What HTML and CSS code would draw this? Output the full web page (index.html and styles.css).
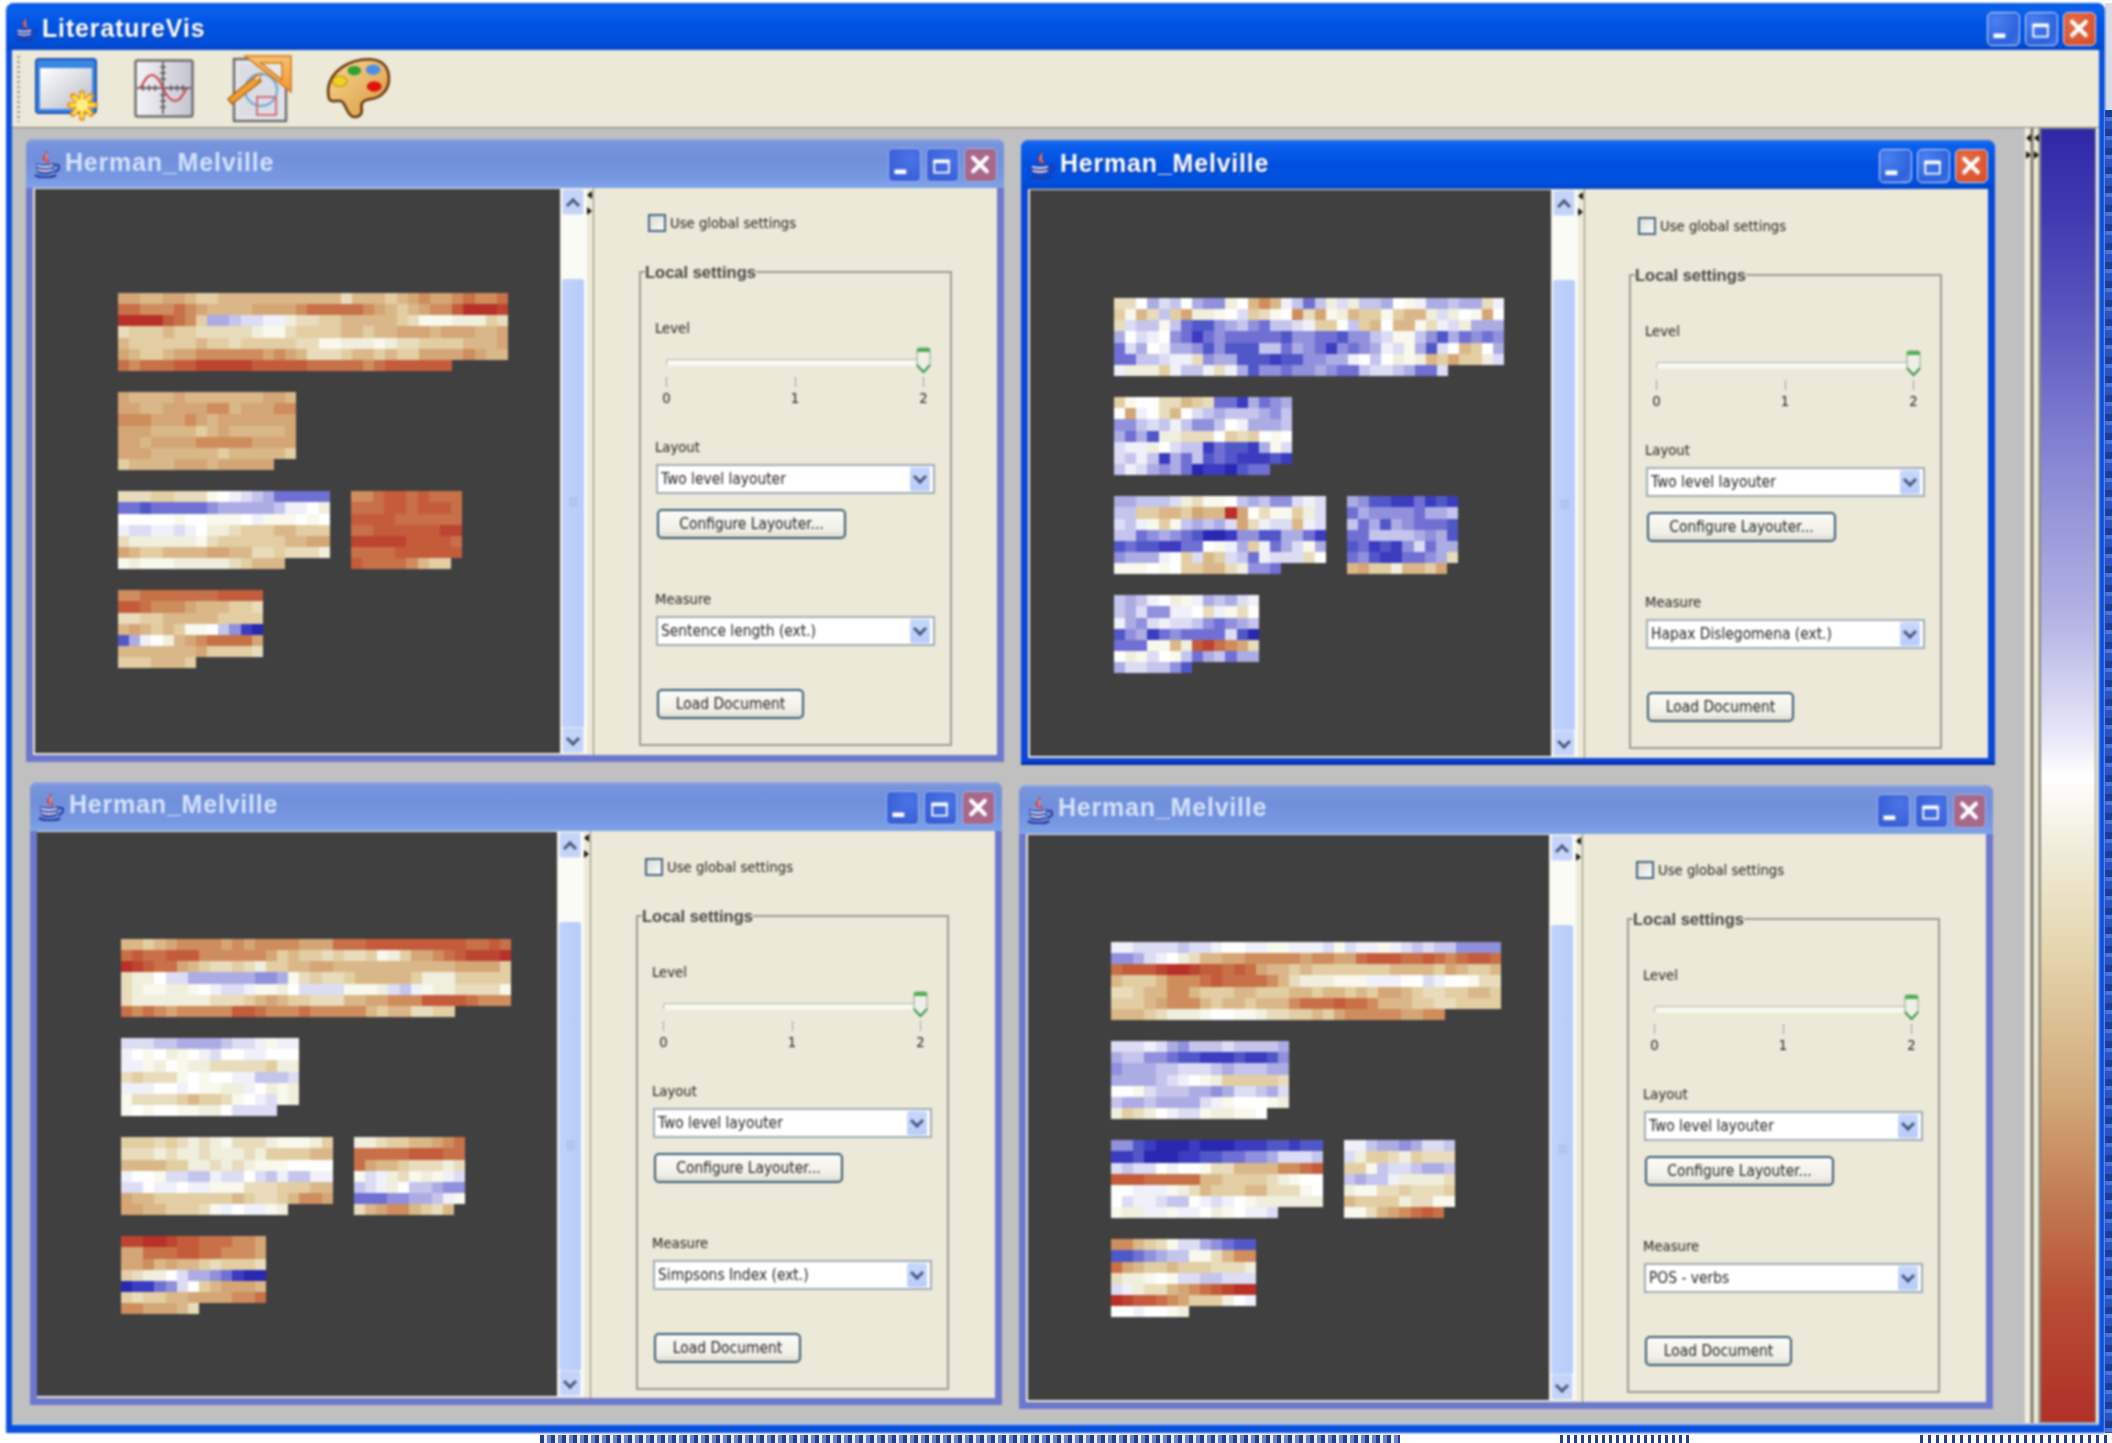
FILE: index.html
```html
<!DOCTYPE html>
<html lang="en">
<head>
    <meta charset="UTF-8">
    <meta name="viewport" content="width=device-width, initial-scale=1.0">
    <title>LiteratureVis</title>
    <link rel="stylesheet" href="styles.css">
</head>
<body>
    <!-- Shared icons -->
    <svg class="defs" width="0" height="0">
        <linearGradient id="gWin" x1="0" y1="0" x2="1" y2="1"><stop offset="0" stop-color="#fff"/><stop offset="1" stop-color="#b8bcc8"/></linearGradient>
        <linearGradient id="gGraph" x1="0" y1="0" x2="1" y2="0"><stop offset="0" stop-color="#f4f4f6"/><stop offset=".5" stop-color="#dcdce4"/><stop offset="1" stop-color="#c4c4d2"/></linearGradient>
        <linearGradient id="gSquare" x1="0" y1="0" x2="0" y2="1"><stop offset="0" stop-color="#f8c070"/><stop offset="1" stop-color="#f09a30"/></linearGradient>
        <linearGradient id="gPal" x1="0" y1="0" x2="1" y2="1"><stop offset="0" stop-color="#f8d890"/><stop offset="1" stop-color="#d89840"/></linearGradient>
        <symbol id="java" viewBox="0 0 26 28">
            <path d="M12 0c4 3-2 5 1 8 1 2 3 3 2 5-5-1-8-5-5-8 2-1 2-3 2-5z" fill="#d8382c"/>
            <path d="M13 4c-2 2-2 4 0 7" fill="none" stroke="#f4b0a0" stroke-width="1.2"/>
            <path d="M2 13c4 2 14 2 18 0l-1 9c-3 3-13 3-16 0z" fill="#26389c"/>
            <path d="M3 15.500c4 2 12 2 16 0M3.500 19.500c4 2 11 2 15 0" fill="none" stroke="#f4f6fc" stroke-width="1.8"/>
            <path d="M20 15c7-2 7 5 0 7" fill="none" stroke="#26389c" stroke-width="2"/>
            <path d="M1 25c5 3 17 3 21 0" fill="none" stroke="#26389c" stroke-width="2.500"/>
        </symbol>
        <symbol id="btnMin" viewBox="0 0 33 33"><rect x="6" y="22" width="13" height="5" fill="#fff"/></symbol>
        <symbol id="btnMax" viewBox="0 0 33 33"><path d="M8 13.500h16v12H8z" fill="none" stroke="#fff" stroke-width="2"/><rect x="7" y="11" width="18" height="4" fill="#fff"/></symbol>
        <symbol id="btnClose" viewBox="0 0 33 33"><path d="M9 9l15 15M24 9L9 24" stroke="#fff" stroke-width="4.500" stroke-linecap="round"/></symbol>
        <symbol id="thumb" viewBox="0 0 15 28">
            <path d="M1 3q0-2 2-2h9q2 0 2 2v16l-6.500 7L1 19z" fill="#efefe8" stroke="#8aa890" stroke-width="1"/>
            <path d="M1 5V3q0-2 2-2h9q2 0 2 2v2z" fill="#4caf50"/>
            <path d="M1 18l6.500 7 6.500-7" fill="none" stroke="#3f9a50" stroke-width="2"/>
        </symbol>
    </svg>

    <div class="window">
        <div class="titlebar">
            <svg class="main-java"><use href="#java"/></svg>
            <span class="main-title">LiteratureVis</span>
            <div class="win-buttons">
                <span class="win-btn"><svg><use href="#btnMin"/></svg></span>
                <span class="win-btn"><svg><use href="#btnMax"/></svg></span>
                <span class="win-btn close"><svg><use href="#btnClose"/></svg></span>
            </div>
        </div>

        <!-- Toolbar -->
        <div class="toolbar">
            <div class="grip"></div>
            <svg class="tool tool-new" viewBox="0 0 66 66">
                <rect x="2" y="3" width="60" height="54" rx="3" fill="#3a86e4" stroke="#1c50b0" stroke-width="2"/>
                <rect x="6" y="12" width="52" height="41" fill="url(#gWin)"/>
                <g stroke="#e89020" stroke-width="6" stroke-linecap="round"><path d="M48 37v25M36 49h25M39 40l18 18M57 40L39 58"/></g>
                <g stroke="#ffe040" stroke-width="3.500" stroke-linecap="round"><path d="M48 38v23M37 49h23M40 41l16 16M56 41L40 57"/></g>
                <circle cx="48" cy="49" r="6" fill="#fff08a"/>
            </svg>
            <svg class="tool tool-graph" viewBox="0 0 60 60">
                <rect x="1.500" y="1.500" width="57" height="56" rx="2" fill="url(#gGraph)" stroke="#6e6e6e" stroke-width="2.500"/>
                <path d="M29 3v52M3 29h54" stroke="#444" stroke-width="1.500" fill="none"/>
                <path d="M26 8h6M26 14h6M26 20h6M26 36h6M26 42h6M26 48h6M9 26v6M15 26v6M21 26v6M37 26v6M43 26v6M49 26v6" stroke="#555" stroke-width="1.500"/>
                <path d="M6 29c4-5 6-13 12-13s9 9 11 13 6 13 12 13 9-9 12-13" fill="none" stroke="#d0404c" stroke-width="2"/>
            </svg>
            <svg class="tool tool-draw" viewBox="0 0 68 68">
                <rect x="9" y="4" width="52" height="62" fill="#e4e4ea" stroke="#6e6e6e" stroke-width="2.500"/>
                <rect x="14" y="9" width="42" height="52" fill="#dcdce4"/>
                <circle cx="36" cy="35" r="16" fill="none" stroke="#68a8d8" stroke-width="2"/>
                <rect x="32" y="42" width="19" height="18" fill="none" stroke="#d07078" stroke-width="2"/>
                <path d="M20 1h46v36z" fill="url(#gSquare)" stroke="#d07818" stroke-width="1.500"/>
                <path d="M36 8h21v17z" fill="#e8e8ea" stroke="#d07818" stroke-width="1.500"/>
                <path d="M3 44l29-24 4 6-29 23z" fill="#f0a030" stroke="#b06010" stroke-width="1.500"/>
                <path d="M28 23l9-5-4 9z" fill="#f4d8b0" stroke="#b06010" stroke-width="1"/>
            </svg>
            <svg class="tool tool-palette" viewBox="0 0 64 60">
                <path d="M3 30C5 14 22 2 42 2c14 0 20 9 19 21-1 10-9 16-17 17-8 1-10 4-9 9 1 6-3 9-8 8-7-2-7-14-12-15-4-1-9 2-11-2-1-3-1-6-1-10z" fill="url(#gPal)" stroke="#6a3810" stroke-width="2.500"/>
                <ellipse cx="14" cy="23" rx="7" ry="5" fill="#f4d020" stroke="#b09010"/>
                <ellipse cx="28" cy="13" rx="6.500" ry="4.500" fill="#30a030"/>
                <ellipse cx="46" cy="12" rx="7" ry="5" fill="#4a90e8"/>
                <ellipse cx="47" cy="28" rx="7" ry="5" fill="#e01010"/>
            </svg>
        </div>

        <div class="main">
            <!-- Internal frames -->
            <div class="desktop">
                <div class="frame frame-a">
                    <div class="frame-title">
                        <svg class="frame-java"><use href="#java"/></svg>
                        <span class="frame-name">Herman_Melville</span>
                        <div class="win-buttons">
                            <span class="win-btn"><svg><use href="#btnMin"/></svg></span>
                            <span class="win-btn"><svg><use href="#btnMax"/></svg></span>
                            <span class="win-btn close"><svg><use href="#btnClose"/></svg></span>
                        </div>
                    </div>
                    <div class="frame-body">
                        <div class="canvas" data-map="sentence"></div>
                        <div class="scrollbar">
                            <span class="scroll-btn"><i class="chev up"></i></span>
                            <div class="scroll-track"><div class="scroll-thumb"><span class="scroll-grip"></span></div></div>
                            <span class="scroll-btn"><i class="chev"></i></span>
                        </div>
                        <div class="divider"><i class="tri-left"></i><i class="tri-right"></i></div>
                        <div class="settings">
                            <label class="global"><span class="checkbox"></span>Use global settings</label>
                            <fieldset class="local">
                                <legend>Local settings</legend>
                                <div class="field-label first">Level</div>
                                <div class="slider">
                                    <div class="track"></div>
                                    <svg class="slider-thumb"><use href="#thumb"/></svg>
                                    <div class="scale">
                                        <span class="mark"><i></i><b>0</b></span>
                                        <span class="mark"><i></i><b>1</b></span>
                                        <span class="mark"><i></i><b>2</b></span>
                                    </div>
                                </div>
                                <div class="field-label">Layout</div>
                                <div class="combo"><span>Two level layouter</span><span class="combo-btn"><i class="chev"></i></span></div>
                                <button class="btn configure" type="button">Configure Layouter...</button>
                                <div class="field-label measure">Measure</div>
                                <div class="combo"><span>Sentence length (ext.)</span><span class="combo-btn"><i class="chev"></i></span></div>
                                <button class="btn load" type="button">Load Document</button>
                            </fieldset>
                        </div>
                    </div>
                </div>

                <div class="frame frame-b active">
                    <div class="frame-title">
                        <svg class="frame-java"><use href="#java"/></svg>
                        <span class="frame-name">Herman_Melville</span>
                        <div class="win-buttons">
                            <span class="win-btn"><svg><use href="#btnMin"/></svg></span>
                            <span class="win-btn"><svg><use href="#btnMax"/></svg></span>
                            <span class="win-btn close"><svg><use href="#btnClose"/></svg></span>
                        </div>
                    </div>
                    <div class="frame-body">
                        <div class="canvas" data-map="hapax"></div>
                        <div class="scrollbar">
                            <span class="scroll-btn"><i class="chev up"></i></span>
                            <div class="scroll-track"><div class="scroll-thumb"><span class="scroll-grip"></span></div></div>
                            <span class="scroll-btn"><i class="chev"></i></span>
                        </div>
                        <div class="divider"><i class="tri-left"></i><i class="tri-right"></i></div>
                        <div class="settings">
                            <label class="global"><span class="checkbox"></span>Use global settings</label>
                            <fieldset class="local">
                                <legend>Local settings</legend>
                                <div class="field-label first">Level</div>
                                <div class="slider">
                                    <div class="track"></div>
                                    <svg class="slider-thumb"><use href="#thumb"/></svg>
                                    <div class="scale">
                                        <span class="mark"><i></i><b>0</b></span>
                                        <span class="mark"><i></i><b>1</b></span>
                                        <span class="mark"><i></i><b>2</b></span>
                                    </div>
                                </div>
                                <div class="field-label">Layout</div>
                                <div class="combo"><span>Two level layouter</span><span class="combo-btn"><i class="chev"></i></span></div>
                                <button class="btn configure" type="button">Configure Layouter...</button>
                                <div class="field-label measure">Measure</div>
                                <div class="combo"><span>Hapax Dislegomena (ext.)</span><span class="combo-btn"><i class="chev"></i></span></div>
                                <button class="btn load" type="button">Load Document</button>
                            </fieldset>
                        </div>
                    </div>
                </div>

                <div class="frame frame-c">
                    <div class="frame-title">
                        <svg class="frame-java"><use href="#java"/></svg>
                        <span class="frame-name">Herman_Melville</span>
                        <div class="win-buttons">
                            <span class="win-btn"><svg><use href="#btnMin"/></svg></span>
                            <span class="win-btn"><svg><use href="#btnMax"/></svg></span>
                            <span class="win-btn close"><svg><use href="#btnClose"/></svg></span>
                        </div>
                    </div>
                    <div class="frame-body">
                        <div class="canvas" data-map="simpson"></div>
                        <div class="scrollbar">
                            <span class="scroll-btn"><i class="chev up"></i></span>
                            <div class="scroll-track"><div class="scroll-thumb"><span class="scroll-grip"></span></div></div>
                            <span class="scroll-btn"><i class="chev"></i></span>
                        </div>
                        <div class="divider"><i class="tri-left"></i><i class="tri-right"></i></div>
                        <div class="settings">
                            <label class="global"><span class="checkbox"></span>Use global settings</label>
                            <fieldset class="local">
                                <legend>Local settings</legend>
                                <div class="field-label first">Level</div>
                                <div class="slider">
                                    <div class="track"></div>
                                    <svg class="slider-thumb"><use href="#thumb"/></svg>
                                    <div class="scale">
                                        <span class="mark"><i></i><b>0</b></span>
                                        <span class="mark"><i></i><b>1</b></span>
                                        <span class="mark"><i></i><b>2</b></span>
                                    </div>
                                </div>
                                <div class="field-label">Layout</div>
                                <div class="combo"><span>Two level layouter</span><span class="combo-btn"><i class="chev"></i></span></div>
                                <button class="btn configure" type="button">Configure Layouter...</button>
                                <div class="field-label measure">Measure</div>
                                <div class="combo"><span>Simpsons Index (ext.)</span><span class="combo-btn"><i class="chev"></i></span></div>
                                <button class="btn load" type="button">Load Document</button>
                            </fieldset>
                        </div>
                    </div>
                </div>

                <div class="frame frame-d">
                    <div class="frame-title">
                        <svg class="frame-java"><use href="#java"/></svg>
                        <span class="frame-name">Herman_Melville</span>
                        <div class="win-buttons">
                            <span class="win-btn"><svg><use href="#btnMin"/></svg></span>
                            <span class="win-btn"><svg><use href="#btnMax"/></svg></span>
                            <span class="win-btn close"><svg><use href="#btnClose"/></svg></span>
                        </div>
                    </div>
                    <div class="frame-body">
                        <div class="canvas" data-map="verbs"></div>
                        <div class="scrollbar">
                            <span class="scroll-btn"><i class="chev up"></i></span>
                            <div class="scroll-track"><div class="scroll-thumb"><span class="scroll-grip"></span></div></div>
                            <span class="scroll-btn"><i class="chev"></i></span>
                        </div>
                        <div class="divider"><i class="tri-left"></i><i class="tri-right"></i></div>
                        <div class="settings">
                            <label class="global"><span class="checkbox"></span>Use global settings</label>
                            <fieldset class="local">
                                <legend>Local settings</legend>
                                <div class="field-label first">Level</div>
                                <div class="slider">
                                    <div class="track"></div>
                                    <svg class="slider-thumb"><use href="#thumb"/></svg>
                                    <div class="scale">
                                        <span class="mark"><i></i><b>0</b></span>
                                        <span class="mark"><i></i><b>1</b></span>
                                        <span class="mark"><i></i><b>2</b></span>
                                    </div>
                                </div>
                                <div class="field-label">Layout</div>
                                <div class="combo"><span>Two level layouter</span><span class="combo-btn"><i class="chev"></i></span></div>
                                <button class="btn configure" type="button">Configure Layouter...</button>
                                <div class="field-label measure">Measure</div>
                                <div class="combo"><span>POS - verbs</span><span class="combo-btn"><i class="chev"></i></span></div>
                                <button class="btn load" type="button">Load Document</button>
                            </fieldset>
                        </div>
                    </div>
                </div>
            </div>

            <!-- Splitter and colour legend -->
            <div class="splitter"><i class="tri-left"></i><i class="tri-left"></i><i class="tri-right"></i><i class="tri-right"></i></div>
            <div class="legend-bar"></div>
        </div>
    </div>

    <script src="heatmap.js"></script>
</body>
</html>
```

FILE: styles.css
```css
/* General Styles */
html, body {
    margin: 0;
    padding: 0;
    overflow: hidden;
}

/* What shows of the window behind, to the right and below */
body {
    width: 2112px;
    height: 1443px;
    font-family: "DejaVu Sans", "Liberation Sans", sans-serif;
    font-stretch: condensed;
    font-size: 14px;
    color: #222;
    background:
        repeating-linear-gradient(90deg, #24408c 0 4px, #e8ecf8 4px 7px, #6a86c8 7px 11px) 540px 1435px / 860px 8px no-repeat,
        repeating-linear-gradient(90deg, #24408c 0 3px, #fff 3px 7px) 1560px 1435px / 130px 8px no-repeat,
        repeating-linear-gradient(90deg, #24408c 0 3px, #fff 3px 8px) 1920px 1435px / 190px 8px no-repeat,
        repeating-linear-gradient(#1c3c94 0 7px, #4a76d8 7px 11px, #2a54bc 11px 19px) 2105px 110px / 7px 1323px no-repeat,
        linear-gradient(#d8dce4, #d8dce4) 2105px 3px / 7px 107px no-repeat,
        #fff;
}

.defs {
    position: absolute;
}

/* Main window */
.window {
    box-sizing: border-box;
    width: 2099px;
    height: 1430px;
    margin: 3px 0 0 6px;
    padding: 0 6px 8px;
    display: flex;
    flex-direction: column;
    background-color: #0a50dc;
    border-radius: 8px 8px 0 0;
    filter: blur(0.8px);
}

.titlebar {
    box-sizing: border-box;
    height: 47px;
    margin: 0 -6px;
    padding: 4px 9px 0;
    display: flex;
    align-items: center;
    background: linear-gradient(#0a5ae0 0, #0a62ec 12%, #0054e4 45%, #0050dc 80%, #0346c8 100%);
    border-radius: 8px 8px 0 0;
}

.main-java {
    width: 22px;
    height: 26px;
    margin-right: 5px;
}

.main-title {
    font-family: "Liberation Sans", sans-serif;
    font-stretch: normal;
    font-weight: bold;
    font-size: 25px;
    letter-spacing: 0.85px;
    color: #fff;
    text-shadow: 1px 1px 1px #002a90;
}

.win-buttons {
    margin-left: auto;
    display: flex;
    gap: 5px;
}

.win-btn {
    box-sizing: border-box;
    width: 33px;
    height: 34px;
    border: 1.5px solid #d0def8;
    border-radius: 5px;
    background: radial-gradient(circle at 25% 25%, #4a80f0, #2e62dc 70%, #4a78e8);
}

.win-btn svg {
    display: block;
    width: 30px;
    height: 31px;
}

.win-btn.close {
    background: radial-gradient(circle at 30% 30%, #e46a44, #d84c26);
}

/* Toolbar */
.toolbar {
    box-sizing: border-box;
    height: 78px;
    padding-left: 5px;
    display: flex;
    align-items: center;
    background-color: #ece9d8;
    border-bottom: 1px solid #84816f;
}

.grip {
    width: 3px;
    height: 66px;
    background-image: linear-gradient(#9a9a90 50%, transparent 50%);
    background-size: 3px 5px;
}

.tool {
    display: block;
    flex: none;
}

.tool-new {
    width: 66px;
    height: 66px;
    margin-left: 14px;
}

.tool-graph {
    width: 60px;
    height: 60px;
    margin-left: 34px;
}

.tool-draw {
    width: 68px;
    height: 68px;
    margin-left: 31px;
}

.tool-palette {
    width: 67px;
    height: 63px;
    margin-left: 32px;
}

/* Desktop area */
.main {
    flex: 1;
    display: flex;
    min-height: 0;
    background-color: #ece9d8;
    border-bottom: 2px solid #a8c8f0;
}

.desktop {
    position: relative;
    width: 2013px;
    background-color: #c0c0c0;
}

.splitter {
    position: relative;
    box-sizing: border-box;
    width: 15px;
    background: linear-gradient(90deg, #f4f2e6 0, #ece9d8 5px, #7c7c6c 6px, #7c7c6c 8px, #ece9d8 9px, #ece9d8 13px, #8a8a78 14px);
}

.splitter i {
    position: absolute;
}

.splitter i:nth-child(1) { left: 1px; top: 6px; }
.splitter i:nth-child(2) { left: 9px; top: 6px; }
.splitter i:nth-child(3) { left: 1px; top: 23px; }
.splitter i:nth-child(4) { left: 9px; top: 23px; }

.legend-bar {
    width: 56px;
    border: 1px solid #8c8c80;
    box-sizing: border-box;
    background: linear-gradient(#2e28a8 0, #3e38b0 6%, #5450bc 13%, #8888d4 26%, #b4b4e6 38%, #e8e8f8 47%, #fff 50%, #f0ecd8 56%, #e4d4ac 64%, #d2a878 75%, #c27a50 83%, #b84c34 91%, #b03028 100%);
}

.tri-left, .tri-right {
    display: block;
    width: 0;
    height: 0;
    border-top: 4px solid transparent;
    border-bottom: 4px solid transparent;
}

.tri-left {
    border-right: 5px solid #111;
}

.tri-right {
    border-left: 5px solid #111;
}

/* Internal frames */
.frame {
    position: absolute;
    box-sizing: border-box;
    display: flex;
    flex-direction: column;
    background-color: #6c78cc;
    border-radius: 8px 8px 0 0;
}

.frame-a { left: 14px; top: 11px; width: 978px; height: 623px; --canvas-w: 525px; --canvas-left: 2px; --pad-x: 83px; --pad-y: 104px; --settings-top: 26px; --local-left: 45px; --name-lift: -2px; }
.frame-b { left: 1009px; top: 12px; width: 974px; height: 625px; --canvas-w: 521px; --canvas-left: 2px; --pad-x: 84px; --pad-y: 108px; --settings-top: 28px; --local-left: 44px; --name-lift: -2px; }
.frame-c { left: 18px; top: 654px; width: 972px; height: 623px; --canvas-w: 520px; --canvas-left: 0; --pad-x: 84px; --pad-y: 107px; --settings-top: 27px; --local-left: 45px; --name-lift: -4px; }
.frame-d { left: 1007px; top: 657px; width: 974px; height: 624px; --canvas-w: 521px; --canvas-left: 2px; --pad-x: 83px; --pad-y: 107px; --settings-top: 27px; --local-left: 44px; --name-lift: -4px; }

.frame.active {
    background-color: #0a46d8;
    box-shadow: inset 0 -3px 0 #0430a8;
}

.frame-title {
    flex: none;
    height: 49px;
    padding: 0 7px 0 8px;
    display: flex;
    align-items: center;
    background: linear-gradient(#90a8e8 0, #7894dc 8%, #7090dc 40%, #7898e2 80%, #7ea4ea 100%);
    border-radius: 8px 8px 0 0;
}

.frame.active .frame-title {
    background: linear-gradient(#2a70ec 0, #0a60ec 10%, #0050e0 50%, #0050e0 85%, #0346c8 100%);
}

.frame-java {
    width: 26px;
    height: 28px;
    margin-right: 5px;
}

.frame-name {
    margin-top: var(--name-lift);
    font-family: "Liberation Sans", sans-serif;
    font-stretch: normal;
    font-weight: bold;
    font-size: 25px;
    letter-spacing: 0.8px;
    color: #d5e2fa;
}

.frame.active .frame-name {
    color: #fff;
    text-shadow: 1px 1px 1px #002a90;
}

.frame .win-buttons {
    margin-top: 2px;
}

.frame .win-btn {
    border-color: #9db4ee;
    background: radial-gradient(circle at 70% 30%, #4a74e6, #3a60d8 70%);
}

.frame .win-btn.close {
    background: #a8688a;
}

.frame.active .win-btn {
    border-color: #d0def8;
    background: radial-gradient(circle at 25% 25%, #4a80f0, #2e62dc 70%, #4a78e8);
}

.frame.active .win-btn.close {
    background: radial-gradient(circle at 30% 30%, #e46a44, #d84c26);
}

.frame-body {
    flex: 1;
    min-height: 0;
    margin: 0 7px 7px;
    display: flex;
    background-color: #ece9d8;
}

/* Heat map canvas */
.canvas {
    flex: none;
    box-sizing: border-box;
    width: var(--canvas-w);
    margin: 1px 0 2px var(--canvas-left);
    padding: var(--pad-y) 0 0 var(--pad-x);
    display: flex;
    flex-direction: column;
    gap: 21px;
    background-color: #404040;
}

.map-line {
    display: flex;
    gap: 21px;
}

.map-row {
    display: flex;
}

.cell {
    width: 11.15px;
    height: 11.17px;
}

/* Palette of the heat map, blue to white to red */
.c-a { background-color: #2828b0; }
.c-b { background-color: #3c3cc0; }
.c-c { background-color: #5058c8; }
.c-d { background-color: #7070d4; }
.c-e { background-color: #9090dc; }
.c-f { background-color: #acace4; }
.c-g { background-color: #c4c4ec; }
.c-h { background-color: #dcdcf4; }
.c-i { background-color: #f0f0fa; }
.c-j { background-color: #ffffff; }
.c-k { background-color: #f8f8ec; }
.c-l { background-color: #f0eedc; }
.c-m { background-color: #e8dcbc; }
.c-n { background-color: #e2cea2; }
.c-o { background-color: #dab788; }
.c-p { background-color: #d4a676; }
.c-q { background-color: #cf8c5c; }
.c-r { background-color: #c87048; }
.c-s { background-color: #c45c3c; }
.c-t { background-color: #bc4430; }
.c-u { background-color: #b83028; }

/* Scrollbar */
.scrollbar {
    flex: none;
    width: 26px;
    margin: 1px 0 2px 1px;
    box-sizing: border-box;
    padding: 0 3px 0 1px;
    display: flex;
    flex-direction: column;
    background-color: #fbfbf6;
}

.scroll-btn {
    flex: none;
    box-sizing: border-box;
    height: 26px;
    padding-top: 6px;
    background-color: #c4d4f8;
    border: 1px solid #e0e8fa;
    border-radius: 3px;
}

.scroll-track {
    flex: 1;
    padding-top: 64px;
    display: flex;
}

.scroll-thumb {
    flex: 1;
    display: flex;
    align-items: center;
    justify-content: center;
    background: linear-gradient(90deg, #c0d2fc, #b8ccfa);
    border-radius: 3px 3px 0 0;
}

.scroll-grip {
    width: 9px;
    height: 10px;
    background-image: linear-gradient(#9fb2da 1px, transparent 1px);
    background-size: 9px 2.500px;
}

.chev {
    display: block;
    width: 7px;
    height: 7px;
    margin: 0 auto;
    border-right: 3px solid #4a5a80;
    border-bottom: 3px solid #4a5a80;
    transform: rotate(45deg);
}

.chev.up {
    margin-top: 4px;
    transform: rotate(225deg);
}

.divider {
    flex: none;
    box-sizing: border-box;
    width: 7px;
    padding-top: 3px;
    display: flex;
    flex-direction: column;
    gap: 8px;
    border-right: 1px solid #8a8a78;
}

/* Settings panel */
.settings {
    flex: 1;
    min-width: 0;
    padding-top: var(--settings-top);
    padding-left: var(--local-left);
    font-size: 14.7px;
    line-height: 18px;
}

.global {
    height: 18px;
    margin-left: 9px;
    display: flex;
    align-items: center;
    gap: 4px;
}

.checkbox {
    box-sizing: border-box;
    width: 18px;
    height: 18px;
    border: 2px solid #456480;
    background: linear-gradient(135deg, #dcdcd4, #fbfbf8);
}

.local {
    box-sizing: border-box;
    width: 313px;
    height: 482.5px;
    min-width: 0;
    margin: 31px 0 0;
    padding: 0 0 0 14px;
    border: 2px solid #9c9c90;
}

.local legend {
    margin-left: -10px;
    padding: 0;
    font-family: "Liberation Sans", sans-serif;
    font-stretch: normal;
    font-weight: bold;
    font-size: 16.5px;
    color: #444;
}

.field-label {
    height: 18px;
    margin-top: 33px;
}

.field-label.first {
    margin-top: 38px;
}

.field-label.measure {
    margin-top: 50.5px;
}

/* Slider */
.slider {
    position: relative;
    box-sizing: border-box;
    width: 270px;
    height: 58.6px;
    margin-top: 9px;
    padding: 13px 0 0 11px;
}

.track {
    width: 262px;
    height: 7px;
    background-color: #f8f8f2;
    border: 1px solid #b4b4a8;
    border-bottom-color: #f4f4ec;
    box-sizing: border-box;
    border-radius: 3px;
}

.slider-thumb {
    position: absolute;
    left: 261px;
    top: 1px;
    width: 15px;
    height: 28px;
}

.scale {
    width: 258px;
    margin-top: 11.4px;
    display: flex;
    justify-content: space-between;
}

.mark {
    width: 1px;
    display: flex;
    flex-direction: column;
    align-items: center;
}

.mark i {
    flex: none;
    width: 1px;
    height: 10px;
    background-color: #a0a098;
}

.mark b {
    margin-top: 2px;
    font-weight: normal;
}

/* Combo boxes and buttons */
.combo {
    box-sizing: border-box;
    width: 279px;
    height: 30px;
    margin-top: 8px;
    margin-left: 1px;
    padding: 0 3px 0 3px;
    display: flex;
    align-items: center;
    justify-content: space-between;
    font-size: 15.4px;
    background-color: #fff;
    border: 2px solid #9eacb4;
}

.combo-btn {
    box-sizing: border-box;
    width: 20px;
    height: 24px;
    padding-top: 5px;
    background: linear-gradient(#c8d8fc, #b8ccfa);
    border-radius: 2px;
}

.btn {
    display: block;
    box-sizing: border-box;
    height: 30px;
    margin-left: 2px;
    padding: 0;
    font: inherit;
    font-size: 15.4px;
    font-stretch: condensed;
    color: #222;
    background: linear-gradient(#fbfbf8, #f0efe6 75%, #dcdace);
    border: 2px solid #3a5a74;
    border-radius: 5px;
}

.configure {
    width: 189px;
    margin-top: 15.5px;
}

.load {
    width: 147px;
    margin-top: 43px;
}
```

FILE: heatmap.js
```js
// Heat map data: one letter per cell, a = deep blue, j = white, u = deep red.
// Spaces are only there to keep the long rows readable.
const MAPS = {
    sentence: [
        [["ppoopponno oooooooooo mooonopqpp qrqqr", "rrqqqrqpoo ooppppqrrr rrqponopqq suuut", "uuuusrqnff ghhiilmmnn ooooonmkkk lllnm", "mnnnonnmmm mmlkkmnnnn oonoopppop ppoop", "onnnnnnonn mnnnnnmmkk lllklmmnnn nooop", "ponnoppqqq qqqpqpommm noononnppp pqpoo", "rqrrrssttt ttsssssrrr rrqrssssss"]],
        [["poooopoooooooppo", "ppooppppqqopppqq", "qqqpppqpoppppppp", "pppoooonopooooop", "ppoppppqqqqqpppp", "pppoooooonooooon", "noooopppoppppp"]],
        [["mmmnnmmmkjihgfddddd", "ddcdddddefffffgiijl", "jjjjjkjjkkkjikkkjkj", "ihhiihijllmnnnoonnn", "mllllllkmnnnnnnoopp", "ponnooooppoommnmmml", "klkkklllllmnooo"],
         ["qqrssrsrrr", "rrrssrsssr", "ssssrrrrrr", "rrsssssstt", "tttttssssr", "rrrrssssss", "srrrrqonn"]],
        [["qqrrrrrrrssss", "ssrqqqpooonnm", "mmnnooooonnnn", "opononkkjgeba", "cfijlopqrrrrp", "ooooooopnnnnm", "nnnooon"]]
    ],
    hapax: [
        [["mmjfhgjfee ljoqoigdgl hlggfjkiff gffmi", "nkomgnpllk jhnmkjqmpk lonnknoolh ljkpj", "mhggkgdcce fgedgghinn jgnojookmi hlfff", "fjhijedbde dddddceedd ceeghkkgec fdede", "dhfjiffece cccggdfedb edefihkfch jonjf", "ddgghiimef fcccbcceef fijgjlklon pnnlh", "illlniggim ifceedeefe ddghhgfddh"]],
        [["nkjjmmonmddbfdef", "jpijmojhgfgggfeg", "eeghgigeegjifffg", "fdfcllmmmjnmnjkj", "hiiljhggbdccbfkh", "hgigbfdgcdcbbbcb", "gihfefdabbacdd"]],
        [["ffggghlmkkjgfgeehih", "ggnnoonpooupjmkknlh", "hgiknkgfgfhpmihhoih", "ggdefedcaabeeccffdb", "cdccbbddjkifnidfhkf", "efffijnhonhgdihhhmj", "kkkjkjnnoomleed"],
         ["feccbbdbcb", "dfeeeedffg", "gdfcfedddc", "ddggggfefc", "cdbcbehdff", "decbbddefm", "opnnloonp"]],
        [["gfgijlkifgfhi", "gfheeiijmikmj", "ifehihhgedefg", "cefbdeddddhca", "dddkkolstrqpm", "jlkhjkgdfgdff", "fhhggec"]]
    ],
    simpson: [
        [["oonopqqqqp qpqqqqpppr rrssssssss srrsr", "rsrrsssqqq qqqpnonnmn mmnklnppqr stttu", "utsrrponmm nmlnnooppo oooooooooo ppppn", "mlljhhffff ffeefkmnmm nooooonlll nnnnn", "mlkkllkjih hikkljhhhh kkklhgikll mmmmk", "mlllllllmm mnoponnmmm ooppqqqsss srqqq", "rqrqpqqqqq ssrqqqrqqq qqonoommnn"]],
        [["hhhggffffghhikii", "ijkjlkjihjjiijjj", "iikljkllmmmmmnll", "mnmmmkjkjjiigggh", "iiijjijkkllijlkl", "kmmmmnonnmkjihkl", "kjkjjkkllj hhhh"]],
        [["nnnmnmlmlkmmmlkkkln", "mmmlmllmlllmlnnnnoo", "oooonnllmlmlkkkjjjj", "ijjkhhggihhjhgiggii", "hhjiijiikkkmmmnnnoo", "poonnnnnnnonmmnoqqp", "ppoonnnmkijiikl"],
         ["llmnnoopqr", "rrrrrsssrr", "rpoonmmmlm", "khilmklkih", "ghiljggfee", "dddeeffgik", "mopqqonmo"]],
        [["ttuutssrrrqqp", "pprrrssrrqqqp", "ppqopoonmnnnm", "nmlljhffedbaa", "abbdehjnopppo", "nmnnooppppqqr", "qqpppom"]]
    ],
    verbs: [
        [["iihhhhghhi jjiikkiiih khiikihghg geeee", "eefhijlmoo ppqqqqqpqq pprsssrrsr qrssr", "rssstuutss rsrpoononn nnnnnoooon ponno", "onnnoqqqrs rrrrqomlll kkkiiijjhi jjkmm", "mmnooqqonn noonnnoono ononpponmm nnoon", "nnnopqqqon oonoooqrrr srrqooonnm mnnnn", "ooonmlllkj jkklmmnnon pqqqqqppqq"]],
        [["hhhihfeggghggggf", "fggeedccbbbcbbce", "efffgghhhgfgggff", "ffffghijklnnnnnm", "jjkhgggffefhhgfh", "gffgffffhikjjjkl", "lnmljihhkllkkj"]],
        [["eecbaaabaaabbbccbcc", "bbcaaabbccddeefhhhg", "hghhjijjkmmooooqqrs", "sssrrrrroonnnnmlkjj", "jjiiiklmonnnoommmkj", "jhiihggjihijkllllll", "klliikiijlkjiih"],
         ["iigffefhhg", "hlnnmlnmmm", "nnkghhgffg", "gfggillllm", "lkkmmnmmmn", "onnnnlmmkk", "kkmopqrsr"]],
        [["qqonmkhhfedcc", "ccdefggkkmoqq", "rponnonnnmmml", "mllkjkhhgghhh", "hilmmopqrstuu", "utssrqpnnnlji", "jjijjkl"]]
    ]
};

document.querySelectorAll(".canvas").forEach(function(canvas) {
    MAPS[canvas.dataset.map].forEach(function(line) {
        const lineEl = document.createElement("div");
        lineEl.className = "map-line";
        line.forEach(function(block) {
            const blockEl = document.createElement("div");
            block.forEach(function(row) {
                const rowEl = document.createElement("div");
                rowEl.className = "map-row";
                for (const ch of row.replace(/ /g, "")) {
                    const cell = document.createElement("div");
                    cell.className = "cell c-" + ch;
                    rowEl.appendChild(cell);
                }
                blockEl.appendChild(rowEl);
            });
            lineEl.appendChild(blockEl);
        });
        canvas.appendChild(lineEl);
    });
});
```
